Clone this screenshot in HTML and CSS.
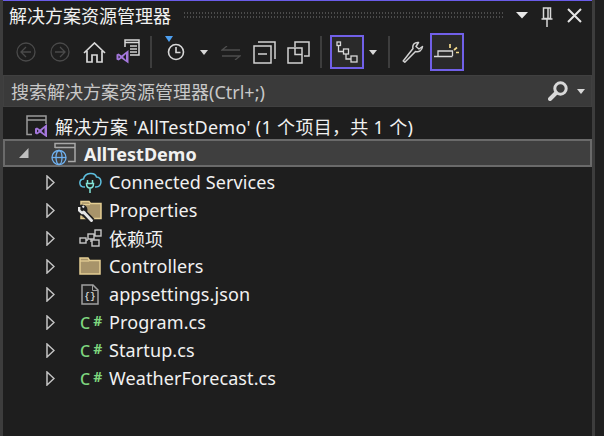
FILE: index.html
```
<!DOCTYPE html>
<html lang="zh">
<head>
<meta charset="utf-8">
<title>解决方案资源管理器</title>
<link rel="stylesheet" href="styles.css">
</head>
<body>
<div class="window">
  <div class="panel">
    <header class="titlebar">
      <span class="title">解决方案资源管理器</span>
      <span class="grip"></span>
      <svg class="ic-drop" width="12" height="7" viewBox="0 0 12 7"><path d="M0 0h12L6 6.500z" fill="#e8e8e8"/></svg>
      <svg class="ic-pin" width="12" height="20" viewBox="0 0 12 20"><path d="M2.500 1h7v10.500h-7zM7 1.500v10M.5 12h11M6 12v8" fill="none" stroke="#d8d8d8" stroke-width="1.500"/></svg>
      <svg class="ic-close" width="15" height="15" viewBox="0 0 15 15"><path d="M1 1l13 13M14 1L1 14" stroke="#e4e4e4" stroke-width="2" fill="none"/></svg>
    </header>
    <div class="toolbar">
      <svg class="tool t-back" width="20" height="20" viewBox="0 0 20 20"><g fill="none" stroke="#4a4a4a" stroke-width="1.300"><circle cx="10" cy="10" r="9"/><path d="M15 10H5.500M10 5l-5 5 5 5"/></g></svg>
      <svg class="tool t-fwd" width="20" height="20" viewBox="0 0 20 20"><g fill="none" stroke="#4a4a4a" stroke-width="1.300"><circle cx="10" cy="10" r="9"/><path d="M5 10h9.500M10 5l5 5-5 5"/></g></svg>
      <svg class="tool t-home" width="23" height="21" viewBox="0 0 23 21"><path d="M1 11L11.500 1 22 11M4 9v11h5v-7h5v7h5V9" fill="none" stroke="#d8d8d8" stroke-width="1.700"/></svg>
      <svg class="tool t-vs" width="24" height="25" viewBox="0 0 24 25"><path d="M9 8V1h14v15H14" fill="none" stroke="#d8d8d8" stroke-width="1.500"/><path d="M9 3.500h14" stroke="#d8d8d8" stroke-width="1.500"/><path d="M14 7h7M14 10h7M14 13h7" stroke="#d0d0d0" stroke-width="1.300"/><path fill-rule="evenodd" d="M12.500 11L5.500 16.500 2.500 14.500.5 15.500v5l2 1 3-2 7 5zM2.500 16.500v3l1.700-1.500zM10 15l-3 3 3 3z" fill="#a477dc"/></svg>
      <span class="sep sep-a"></span>
      <svg class="tool t-clock" width="22" height="28" viewBox="0 0 22 28"><path d="M0 0h8L4 6z" fill="#4d9ff0"/><g fill="none" stroke="#d8d8d8" stroke-width="1.600"><circle cx="11" cy="16" r="7.500"/><path d="M11 11v5.500h4.500"/></g></svg>
      <svg class="caret t-caret1" width="8" height="5" viewBox="0 0 8 5"><path d="M0 0h8L4 5z" fill="#d8d8d8"/></svg>
      <svg class="tool t-sync" width="20" height="14" viewBox="0 0 20 14"><path d="M19 4H1l5-4M1 10h18l-5 4" fill="none" stroke="#4d4d4d" stroke-width="1.300"/></svg>
      <svg class="tool t-coll" width="23" height="23" viewBox="0 0 23 23"><g fill="none" stroke="#d2d2d2" stroke-width="1.500"><path d="M5 1h17v17M1 5h17v17H1zM5 13h9"/></g></svg>
      <svg class="tool t-multi" width="23" height="23" viewBox="0 0 23 23"><g fill="none" stroke="#d2d2d2" stroke-width="1.500"><path d="M8 6V1h14v14h-5M1 7h14v15H1zM8 7v6.500h7"/></g></svg>
      <span class="sep sep-b"></span>
      <span class="toggle t-graph">
        <svg width="22" height="22" viewBox="0 0 22 22"><g fill="none" stroke="#d8d8d8" stroke-width="1.300"><rect x="1" y="1" width="3.500" height="3.500"/><rect x="7.500" y="8" width="5" height="5"/><rect x="15" y="15" width="6" height="6"/><path d="M2.500 5v5.500h5M10 13v5h5"/></g></svg>
      </span>
      <svg class="caret t-caret2" width="8" height="5" viewBox="0 0 8 5"><path d="M0 0h8L4 5z" fill="#d8d8d8"/></svg>
      <span class="sep sep-c"></span>
      <svg class="tool t-wrench" width="22" height="22" viewBox="0 0 22 22"><path d="M2 19l-.8 1 1.600 1.200L13.500 10.500c3.500 1 6.500-1 7-5l-3.500 2.500-3-2.500 2.500-4c-3.500-.5-6.500 2-5.500 6z" fill="#1e1e1e" stroke="#d2d2d2" stroke-width="1.500" stroke-linejoin="round"/></svg>
      <span class="toggle toggle-tall t-sweep">
        <svg width="26" height="20" viewBox="0 0 26 20"><path d="M4 14V9h14.500v5M0 14.500h18.500" fill="none" stroke="#d8d8d8" stroke-width="1.300"/><path d="M16 2v4M20 8l3-2.500M22 10.500h3" stroke="#f2d98a" stroke-width="1.700" fill="none"/></svg>
      </span>
    </div>
    <div class="search">
      <span class="search-label">搜索解决方案资源管理器<span class="search-latin">(Ctrl+;)</span></span>
      <svg class="search-ic" width="20" height="20" viewBox="0 0 20 20"><circle cx="12.500" cy="7.500" r="5.700" fill="none" stroke="#d8d8d8" stroke-width="3"/><path d="M8 12L2 18" stroke="#d8d8d8" stroke-width="4" stroke-linecap="round"/></svg>
      <svg class="caret search-caret" width="8" height="5" viewBox="0 0 8 5"><path d="M0 0h8L4 5z" fill="#d8d8d8"/></svg>
    </div>
    <ul class="tree">
      <li class="row row-solution">
        <svg class="ico" width="22" height="22" viewBox="0 0 22 22"><path d="M6 19.500H1V1h19v8M1 5h19" fill="none" stroke="#9a9a9a" stroke-width="1.500"/><path fill-rule="evenodd" d="M21 9l-7 5.500-3-2-2 1v5l2 1 3-2 7 5zM11 14.500v3l1.700-1.500zM18.500 13l-3 3 3 3z" fill="#a477dc"/></svg>
        <span class="label">解决方案 'AllTestDemo' (1 个项目，共 1 个)</span>
      </li>
      <li class="row row-project">
        <svg class="tw tw-open" width="10" height="10" viewBox="0 0 10 10"><path d="M9.500 0v10H0z" fill="#c0c0c0"/></svg>
        <svg class="ico" width="26" height="26" viewBox="0 0 26 26"><path d="M4 8V3.500h20v18h-7M4 7.500h20" fill="none" stroke="#a8a8a8" stroke-width="1.500"/><g fill="none" stroke="#6fb1f0" stroke-width="1.300"><circle cx="8" cy="17.500" r="7"/><ellipse cx="8" cy="17.500" rx="3" ry="7"/><path d="M1 17.500h14"/></g></svg>
        <span class="label label-bold">AllTestDemo</span>
      </li>
      <li class="row row-item">
        <svg class="tw" width="9" height="15" viewBox="0 0 9 15"><path d="M1 1l7 6.500-7 6.500z" fill="none" stroke="#c4c4c4" stroke-width="1.500"/></svg>
        <svg class="ico" width="23" height="23" viewBox="0 0 23 23"><path d="M6 16H5.500C-.5 16-.5 8.500 4.500 8 6 1 16 1 17.500 6c6 0 6 10-.5 10h-1" fill="none" stroke="#5ec0e0" stroke-width="1.500"/><path d="M8.500 9v3.500M13.500 9v3.500M7.500 12.500h7c0 3-1 4.500-3.500 4.500s-3.500-1.500-3.500-4.500zM11 17v5" fill="none" stroke="#83e3d8" stroke-width="1.500"/></svg>
        <span class="label">Connected Services</span>
      </li>
      <li class="row row-item">
        <svg class="tw" width="9" height="15" viewBox="0 0 9 15"><path d="M1 1l7 6.500-7 6.500z" fill="none" stroke="#c4c4c4" stroke-width="1.500"/></svg>
        <svg class="ico ico-props" width="24" height="25" viewBox="0 0 24 25"><path d="M3 19V2.500h8l1.500 2H23v15H3z" fill="#a8946a" stroke="#e3cd93" stroke-width="1.500"/><path d="M3 5.500h9" stroke="#e3cd93" stroke-width="1.300"/><path d="M5 13l9 9" stroke="#1e1e1e" stroke-width="6.500"/><circle cx="4" cy="11" r="5.500" fill="#1e1e1e"/><path d="M5.500 13l8 8.500" stroke="#e6e6e6" stroke-width="3" stroke-linecap="round"/><path d="M1.200 8v3.500l2.800 2.500h3.500" fill="none" stroke="#e6e6e6" stroke-width="2.400"/><path d="M6 8.500L4.500 7" stroke="#e6e6e6" stroke-width="2"/></svg>
        <span class="label">Properties</span>
      </li>
      <li class="row row-item">
        <svg class="tw" width="9" height="15" viewBox="0 0 9 15"><path d="M1 1l7 6.500-7 6.500z" fill="none" stroke="#c4c4c4" stroke-width="1.500"/></svg>
        <svg class="ico" width="23" height="18" viewBox="0 0 23 18"><g fill="none" stroke="#c8c8c8" stroke-width="1.400"><rect x="1" y="9" width="6" height="5"/><rect x="9" y="5" width="6" height="5"/><rect x="16" y="1" width="6" height="6"/><rect x="13" y="11" width="7" height="6"/><path d="M7 11h2M15 6h1M12 10v3"/></g></svg>
        <span class="label label-cjk">依赖项</span>
      </li>
      <li class="row row-item">
        <svg class="tw" width="9" height="15" viewBox="0 0 9 15"><path d="M1 1l7 6.500-7 6.500z" fill="none" stroke="#c4c4c4" stroke-width="1.500"/></svg>
        <svg class="ico" width="22" height="18" viewBox="0 0 22 18"><path d="M1 17V1h8l1.500 2.500H21V17z" fill="#a8946a" stroke="#e3cd93" stroke-width="1.500"/><path d="M1 4h9" stroke="#e3cd93" stroke-width="1.300"/></svg>
        <span class="label">Controllers</span>
      </li>
      <li class="row row-item">
        <svg class="tw" width="9" height="15" viewBox="0 0 9 15"><path d="M1 1l7 6.500-7 6.500z" fill="none" stroke="#c4c4c4" stroke-width="1.500"/></svg>
        <svg class="ico ico-json" width="18" height="21" viewBox="0 0 18 21"><path d="M1 1h11l5 5v14H1z" fill="#242424" stroke="#a0a0a0" stroke-width="1.500"/><path d="M11.500 1v5.500H17" fill="none" stroke="#a0a0a0"/><text class="json-glyph" x="9" y="15" text-anchor="middle">{}</text></svg>
        <span class="label">appsettings.json</span>
      </li>
      <li class="row row-item">
        <svg class="tw" width="9" height="15" viewBox="0 0 9 15"><path d="M1 1l7 6.500-7 6.500z" fill="none" stroke="#c4c4c4" stroke-width="1.500"/></svg>
        <span class="cs"><span class="cs-c">C</span><span class="cs-h">#</span></span>
        <span class="label">Program.cs</span>
      </li>
      <li class="row row-item">
        <svg class="tw" width="9" height="15" viewBox="0 0 9 15"><path d="M1 1l7 6.500-7 6.500z" fill="none" stroke="#c4c4c4" stroke-width="1.500"/></svg>
        <span class="cs"><span class="cs-c">C</span><span class="cs-h">#</span></span>
        <span class="label">Startup.cs</span>
      </li>
      <li class="row row-item">
        <svg class="tw" width="9" height="15" viewBox="0 0 9 15"><path d="M1 1l7 6.500-7 6.500z" fill="none" stroke="#c4c4c4" stroke-width="1.500"/></svg>
        <span class="cs"><span class="cs-c">C</span><span class="cs-h">#</span></span>
        <span class="label">WeatherForecast.cs</span>
      </li>
    </ul>
  </div>
</div>
</body>
</html>
```
FILE: styles.css
```
* { box-sizing: border-box; }
html, body { margin: 0; padding: 0; }
body {
  width: 604px; height: 436px; overflow: hidden;
  background: #1e1e1e;
  font-family: "Noto Sans", "Noto Sans CJK SC", sans-serif;
  color: #f1f1f1;
}
.window {
  width: 604px; height: 436px;
  display: flex;
  background: #1f1f1f;
}
.panel {
  width: 595px; height: 436px;
  border-left: 3px solid #3d3d3d;
  border-right: 3px solid #3d3d3d;
  background: #1e1e1e;
  box-shadow: inset 0 1px 0 #6a5ce8;
  display: flex; flex-direction: column;
}
.titlebar {
  height: 29px; flex: none;
  padding-top: 1px;
  display: flex; align-items: center;
}
.title {
  margin-left: 6px;
  font: 18px/24px "Noto Sans CJK SC", sans-serif;
  color: #f1f1f1;
}
.grip {
  width: 320px; height: 8px;
  margin-left: 12px;
  background-image: radial-gradient(circle, #4c4c4c 0.9px, transparent 1px);
  background-size: 3px 4px;
}
.ic-drop { margin-left: 13px; flex: none; }
.ic-pin { margin-left: 13px; flex: none; margin-top: 3px; }
.ic-close { margin-left: 14px; flex: none; }

.toolbar {
  height: 46px; flex: none;
  display: flex; align-items: center;
}
.tool, .caret, .sep, .toggle { flex: none; }
.t-back { margin-left: 13px; }
.t-fwd { margin-left: 14px; }
.t-home { margin-left: 13px; }
.t-vs { margin-left: 10px; margin-top: -2px; }
.sep { width: 2px; height: 32px; background: #3d3d3d; }
.sep-a { margin-left: 10px; }
.t-clock { margin-left: 13px; margin-top: -4px; }
.caret { display: block; }
.t-caret1 { margin-left: 13px; }
.t-sync { margin-left: 13px; margin-top: 1px; }
.t-coll { margin-left: 12px; }
.t-multi { margin-left: 11px; }
.sep-b { margin-left: 10px; }
.toggle {
  width: 34px; height: 34px;
  border: 2px solid #7160e8;
  background: #2a2a2a;
  display: flex; align-items: center; justify-content: center;
}
.toggle-tall { height: 38px; }
.t-graph { margin-left: 8px; }
.t-caret2 { margin-left: 5px; }
.sep-c { margin-left: 11px; }
.t-wrench { margin-left: 12px; }
.t-sweep { margin-left: 6px; }

.search {
  height: 32px; flex: none;
  background: #3a3a3a;
  border: 1px solid #404040;
  display: flex; align-items: center;
}
.search-label {
  margin-left: 7px;
  font: 18px/24px "Noto Sans CJK SC", sans-serif;
  color: #c8c8c8;
  flex: 1;
}
.search-latin { font-family: "Noto Sans", sans-serif; }
.search-ic { margin-right: 9px; }
.search-caret { margin-right: 6px; }

.tree { list-style: none; margin: 6px 0 0; padding: 0; }
.row {
  height: 28px;
  display: flex; align-items: center;
  font-size: 18px;
  white-space: nowrap;
}
.row-solution { height: 26px; padding-left: 23px; }
.row-solution .ico { margin-right: 7px; flex: none; }
.row-solution .label { letter-spacing: 0.3px; }
.row-project {
  margin-bottom: 1px;
  background: #3f3f3f;
  border: 2px solid #6a6a6a;
  padding-left: 14px;
}
.row-project .ico { margin-left: 22px; margin-right: 7px; flex: none; }
.label-bold { font-weight: 700; margin-top: 2px; }
.row-item {
  padding-left: 43px;
  display: grid;
  grid-template-columns: 9px 24px 30px 1fr;
  align-items: center;
  letter-spacing: 0.1px;
}
.row-item > .tw { grid-column: 1; }
.row-item > .ico, .row-item > .cs { grid-column: 3; }
.row-item > .label { grid-column: 4; }
.tw { flex: none; }
.ico-json { margin-left: 2px; }
.ico-props { margin-left: -1px; margin-top: 3px; }
.label-cjk { font-family: "Noto Sans CJK SC", sans-serif; letter-spacing: 0; }
.cs {
  display: block;
  font-family: "Noto Sans", sans-serif;
  font-weight: 700;
  line-height: 20px;
  color: #7ed67e;
}
.cs-c { font-size: 16px; font-weight: 500; margin-left: 1px; }
.cs-h { font-size: 14px; margin-left: 3px; vertical-align: 3px; }
.json-glyph { font: 700 9px "Liberation Mono", monospace; fill: #d0d0d0; }
```
